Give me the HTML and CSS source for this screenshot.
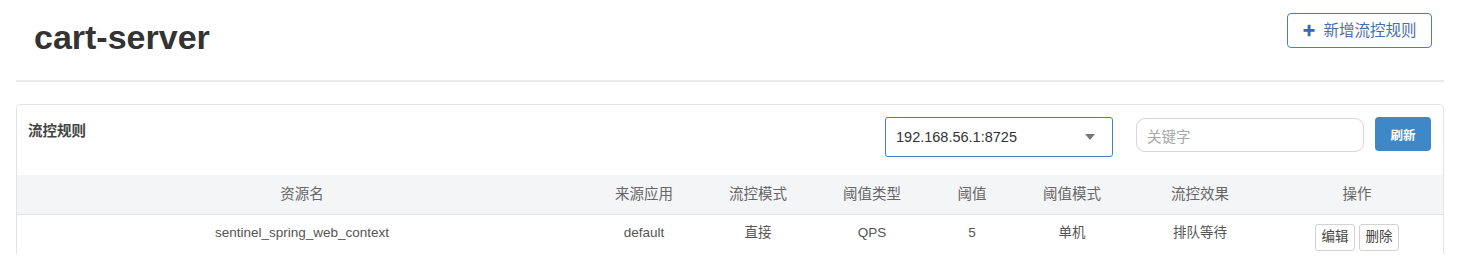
FILE: index.html
```html
<!DOCTYPE html>
<html lang="zh">
<head>
<meta charset="utf-8">
<link rel="stylesheet" href="styles.css">
</head>
<body>
<div class="page">
  <div class="page-header">
    <h1 class="title">cart-server</h1>
    <button class="btn-add"><span class="plus">✚</span>新增流控规则</button>
  </div>
  <div class="panel">
    <div class="panel-heading">
      <div class="panel-title">流控规则</div>
      <div class="controls">
        <div class="select">
          <span>192.168.56.1:8725</span>
          <span class="caret"></span>
        </div>
        <div class="search">关键字</div>
        <button class="btn-refresh">刷新</button>
      </div>
    </div>
    <table class="rules">
      <colgroup>
        <col class="c1"><col class="c2"><col class="c3"><col class="c4"><col class="c5"><col class="c6"><col class="c7"><col class="c8">
      </colgroup>
      <thead>
        <tr>
          <th>资源名</th><th>来源应用</th><th>流控模式</th><th>阈值类型</th><th>阈值</th><th>阈值模式</th><th>流控效果</th><th>操作</th>
        </tr>
      </thead>
      <tbody>
        <tr>
          <td>sentinel_spring_web_context</td><td>default</td><td>直接</td><td>QPS</td><td>5</td><td>单机</td><td>排队等待</td>
          <td class="ops"><button class="btn-op">编辑</button><button class="btn-op">删除</button></td>
        </tr>
      </tbody>
    </table>
  </div>
</div>
</body>
</html>
```

FILE: styles.css
```css
* { box-sizing: border-box; }
html, body { margin: 0; padding: 0; background: #fff; }
body {
  font-family: "Liberation Sans", Arial, "Noto Sans CJK SC", sans-serif;
  color: #555;
}
.page { margin: 0 16px; }
.page-header {
  display: flex;
  justify-content: space-between;
  align-items: flex-start;
  height: 82px;
  padding: 13px 12px 0 18px;
  border-bottom: 2px solid #eaeaea;
}
.title {
  margin: 4px 0 0 0;
  font-size: 34px;
  font-weight: bold;
  color: #333;
  line-height: 40px;
}
.btn-add {
  width: 145px;
  height: 35px;
  background: #fff;
  border: 1px solid #4a7fb8;
  border-radius: 4px;
  color: #4670a6;
  font-family: inherit;
  font-size: 15.5px;
  line-height: 20px;
  padding: 0;
  display: flex;
  align-items: center;
  justify-content: center;
  gap: 8px;
}
.plus { font-size: 13px; color: #3b6aa8; }
.panel {
  margin-top: 22px;
  border: 1px solid #e3e3e3;
  border-bottom: none;
  border-radius: 5px 5px 0 0;
}
.panel-heading {
  display: flex;
  justify-content: space-between;
  align-items: flex-start;
  padding: 12px 12px 18px 11px;
}
.panel-title {
  margin-top: 4px;
  font-size: 14.5px;
  font-weight: bold;
  color: #444;
  line-height: 20px;
}
.controls { display: flex; align-items: flex-start; }
.select {
  width: 228px;
  height: 40px;
  border: 1px solid #4a7fb8;
  border-radius: 3px;
  display: flex;
  align-items: center;
  justify-content: space-between;
  padding: 0 17px 0 10px;
  font-size: 14.5px;
  color: #333;
  margin-right: 23px;
}
.caret {
  width: 0; height: 0;
  border-left: 5px solid transparent;
  border-right: 5px solid transparent;
  border-top: 6px solid #777;
}
.search {
  width: 228px;
  height: 34px;
  margin-top: 1px;
  border: 1px solid #d6d6d6;
  border-radius: 9px;
  padding: 0 10px;
  display: flex;
  align-items: center;
  font-size: 14.5px;
  color: #a8a8a8;
  margin-right: 11px;
}
.btn-refresh {
  width: 56px;
  height: 34px;
  border: none;
  border-radius: 4px;
  background: #3f88c8;
  color: #fff;
  font-family: inherit;
  font-size: 12.5px;
  font-weight: bold;
}
.rules {
  width: 100%;
  border-collapse: collapse;
  table-layout: fixed;
}
.c1 { width: 570px; }
.c2, .c3, .c4, .c6 { width: 114px; }
.c5 { width: 86px; }
.c7 { width: 142px; }
.c8 { width: auto; }
.rules th {
  height: 39px;
  background: #f4f5f6;
  border-bottom: 1px solid #e2e2e2;
  font-weight: normal;
  font-size: 14.5px;
  line-height: 20px;
  color: #666;
  text-align: center;
  padding: 0;
}
.rules td {
  height: 40px;
  font-size: 13.5px;
  line-height: 20px;
  color: #555;
  text-align: center;
  vertical-align: top;
  padding: 8px 0 0 0;
}
.rules td.ops { padding-top: 9px; }
.btn-op {
  width: 40px;
  height: 27px;
  background: #fff;
  border: 1px solid #d2d2d2;
  border-radius: 3px;
  font-family: inherit;
  font-size: 13.5px;
  line-height: 20px;
  color: #444;
  padding: 0;
  margin: 0 2px;
  vertical-align: top;
}
```
